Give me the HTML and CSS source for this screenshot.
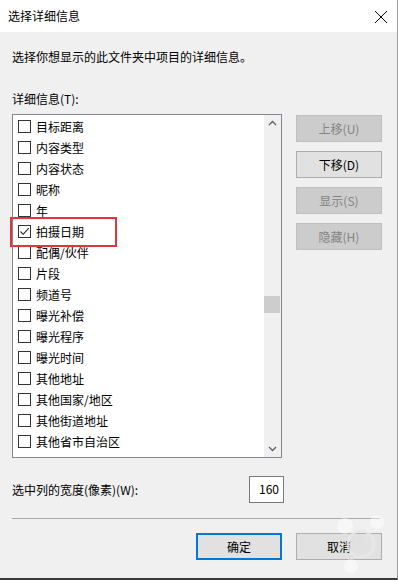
FILE: index.html
```html
<!DOCTYPE html>
<html lang="zh-CN">
<head>
    <meta charset="UTF-8">
    <meta name="viewport" content="width=device-width, initial-scale=1.0">
    <title>选择详细信息</title>
    <link rel="stylesheet" href="styles.css">
</head>
<body>
    <div class="dialog">
        <div class="titlebar">
            <span class="title">选择详细信息</span>
            <svg class="close" width="14" height="14" viewBox="0 0 14 14">
                <path d="M1 1 L13 13 M13 1 L1 13" stroke="#000" stroke-width="1" fill="none"/>
            </svg>
        </div>
        <div class="content">
            <p class="intro">选择你想显示的此文件夹中项目的详细信息。</p>
            <div class="label">详细信息(T):</div>
            <div class="main">
                <div class="listbox">
                    <ul class="items">
                        <li><span class="check"></span>目标距离</li>
                        <li><span class="check"></span>内容类型</li>
                        <li><span class="check"></span>内容状态</li>
                        <li><span class="check"></span>昵称</li>
                        <li><span class="check"></span>年</li>
                        <li><span class="check checked">
                            <svg width="11" height="11" viewBox="0 0 11 11"><path d="M1.5 5.5 L4.2 8.3 L9.8 2.2" stroke="#222" stroke-width="1.1" fill="none"/></svg>
                        </span>拍摄日期</li>
                        <li><span class="check"></span>配偶/伙伴</li>
                        <li><span class="check"></span>片段</li>
                        <li><span class="check"></span>频道号</li>
                        <li><span class="check"></span>曝光补偿</li>
                        <li><span class="check"></span>曝光程序</li>
                        <li><span class="check"></span>曝光时间</li>
                        <li><span class="check"></span>其他地址</li>
                        <li><span class="check"></span>其他国家/地区</li>
                        <li><span class="check"></span>其他街道地址</li>
                        <li><span class="check"></span>其他省市自治区</li>
                    </ul>
                    <div class="scrollbar">
                        <svg class="arrow" width="17" height="17" viewBox="0 0 17 17"><path d="M5 10 L8.5 6.5 L12 10" stroke="#606060" stroke-width="1.3" fill="none"/></svg>
                        <div class="track">
                            <div class="thumb"></div>
                        </div>
                        <svg class="arrow" width="17" height="17" viewBox="0 0 17 17"><path d="M5 7 L8.5 10.5 L12 7" stroke="#606060" stroke-width="1.3" fill="none"/></svg>
                    </div>
                    <div class="highlight"></div>
                </div>
                <div class="side-buttons">
                    <button class="btn" disabled>上移(U)</button>
                    <button class="btn">下移(D)</button>
                    <button class="btn" disabled>显示(S)</button>
                    <button class="btn" disabled>隐藏(H)</button>
                </div>
            </div>
            <div class="width-row">
                <span>选中列的宽度(像素)(W):</span>
                <div class="width-input">160</div>
            </div>
            <div class="separator"></div>
            <div class="footer">
                <button class="btn default">确定</button>
                <button class="btn">取消</button>
            </div>
        </div>
        <svg class="watermark" width="60" height="62" viewBox="0 0 60 62">
            <circle cx="14" cy="12" r="8" fill="#fff" opacity="0.45"/>
            <circle cx="46" cy="8" r="7" fill="#fff" opacity="0.45"/>
            <circle cx="30" cy="30" r="13" fill="none" stroke="#e8e8e8" stroke-width="3" opacity="0.8"/>
            <circle cx="30" cy="26" r="5" fill="none" stroke="#e4e4e4" stroke-width="2" opacity="0.8"/>
            <circle cx="20" cy="52" r="7" fill="#fff" opacity="0.45"/>
        </svg>
    </div>
</body>
</html>
```

FILE: styles.css
```css
* {
    box-sizing: border-box;
}
body {
    margin: 0;
    font-family: "Noto Sans CJK SC", "Noto Sans", sans-serif;
    font-size: 12px;
    color: #000;
    background: #fff;
}
.dialog {
    position: relative;
    width: 398px;
    height: 580px;
    border-right: 1px solid #9a9a9a;
    border-bottom: 2px solid #3a3a3a;
    display: flex;
    flex-direction: column;
    overflow: hidden;
}
.titlebar {
    height: 32px;
    background: #fff;
    display: flex;
    align-items: center;
    justify-content: space-between;
    padding: 0 9px 0 8px;
}
.title {
    line-height: 16px;
}
.close {
    display: block;
    margin-top: 1px;
}
.content {
    flex: 1;
    background: #f0f0f0;
    padding: 17px 15px 0 12px;
}
.intro {
    margin: 0;
    line-height: 16px;
}
.label {
    margin-top: 26px;
    line-height: 16px;
}
.main {
    display: flex;
    margin-top: 7px;
}
.listbox {
    position: relative;
    width: 272px;
    height: 344px;
    background: #fff;
    border: 1px solid #828790;
    display: flex;
}
.items {
    list-style: none;
    margin: 0;
    padding: 1px 0 0;
    flex: 1;
    overflow: hidden;
}
.items li {
    height: 21px;
    display: flex;
    align-items: center;
    padding-left: 5px;
    white-space: nowrap;
}
.check {
    width: 13px;
    height: 13px;
    border: 1px solid #333;
    background: #fff;
    margin-right: 5px;
    display: flex;
    align-items: center;
    justify-content: center;
    flex: none;
}
.check svg {
    display: block;
}
.scrollbar {
    width: 17px;
    background: #f0f0f0;
    display: flex;
    flex-direction: column;
}
.arrow {
    display: block;
    flex: none;
}
.track {
    flex: 1;
}
.thumb {
    margin: 164px 1px 0 0;
    height: 17px;
    background: #cdcdcd;
}
.highlight {
    position: absolute;
    left: -3px;
    top: 102px;
    width: 107px;
    height: 30px;
    border: 2px solid #e2353b;
}
.side-buttons {
    display: flex;
    flex-direction: column;
    gap: 9px;
    margin: 1px 0 0 14px;
}
.btn {
    width: 86px;
    height: 27px;
    font-family: inherit;
    font-size: 12px;
    background: #e1e1e1;
    border: 1px solid #adadad;
    color: #000;
    padding: 0;
}
.btn:disabled {
    background: #cccccc;
    border-color: #bfbfbf;
    color: #838383;
}
.btn.default {
    border: 2px solid #0078d7;
}
.width-row {
    display: flex;
    align-items: center;
    justify-content: space-between;
    width: 272px;
    margin-top: 18px;
}
.width-input {
    width: 35px;
    height: 27px;
    background: #fff;
    border: 1px solid #7a7a7a;
    text-align: right;
    padding: 4px 4px 0 0;
    line-height: 16px;
}
.separator {
    height: 1px;
    background: #a8a8a8;
    margin-top: 15px;
    width: 368px;
}
.footer {
    display: flex;
    justify-content: flex-end;
    gap: 14px;
    margin-top: 14px;
}
.watermark {
    position: absolute;
    right: 6px;
    bottom: 2px;
}
```
